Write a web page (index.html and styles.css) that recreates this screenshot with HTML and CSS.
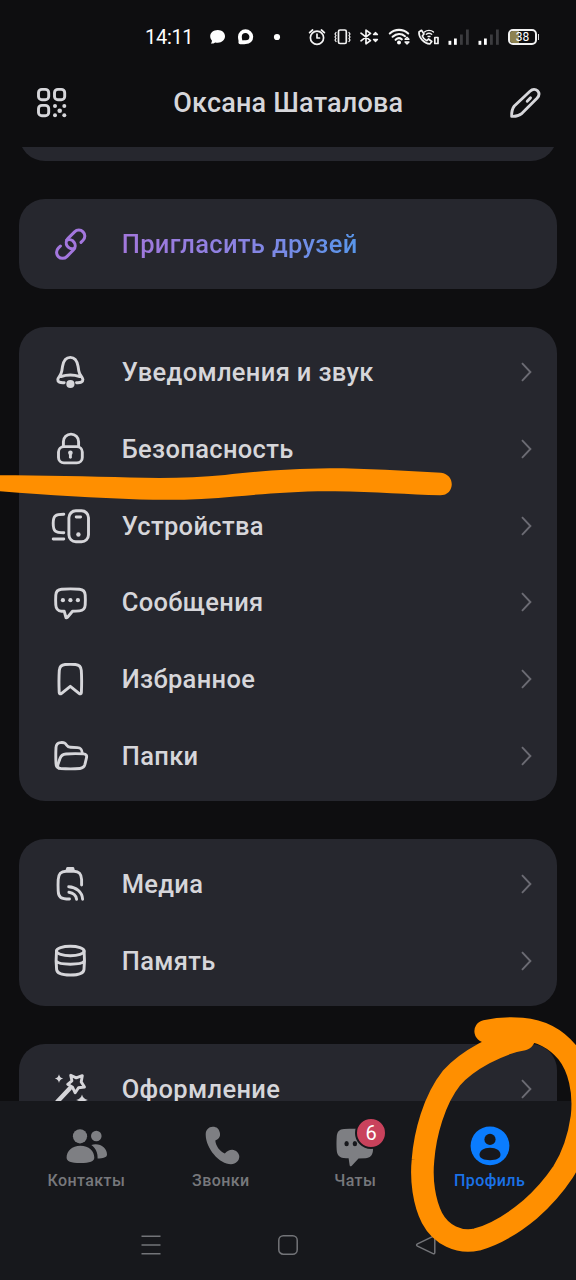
FILE: index.html
```html
<!DOCTYPE html>
<html lang="ru">
<head>
<meta charset="utf-8">
<title>Профиль</title>
<link rel="stylesheet" href="styles.css">
</head>
<body>
<div class="screen">
  <header class="status">
    <span class="time">14:11</span>
    <svg width="20" height="24" viewBox="0 0 20 24" class="solid"><path d="M9.800 5C14 5 17 7.800 17 11.300S14 17.800 9.800 17.800C8.800 17.800 8 17.700 7.200 17.400C6 18.300 4.600 18.700 2.800 18.600C3.600 17.800 4 16.800 3.900 15.600C2.800 14.400 2.200 13 2.200 11.300C2.200 7.800 5.400 5 9.800 5Z"/></svg>
    <svg width="20" height="24" viewBox="0 0 20 24"><path class="ring" d="M4.300 17.300C5 16.500 3.900 14.500 3.900 11.700C3.900 8.500 6.400 6.200 9.500 6.200S15.300 8.700 15.300 11.800S13 17.200 9.800 17.200C8.300 17.200 7.500 17.300 4.300 17.300Z"/></svg>
    <svg width="10" height="24" viewBox="0 0 10 24" class="solid"><circle cx="5" cy="12" r="3.100"/></svg>
    <svg width="22" height="24" viewBox="0 0 22 24" class="thin"><circle cx="11" cy="12.700" r="6.600"/><path d="M11 9.200V13H13.500M3.600 7.700L6.600 5M18.400 7.700L15.400 5"/></svg>
    <svg width="22" height="24" viewBox="0 0 22 24" class="thin"><rect x="6.500" y="5" width="7.800" height="13.500" rx="1.500"/><path class="fine" d="M4 7.500L3 9L4 10.500L3 12L4 13.500L3 15L4 16.500M17 7.500L18 9L17 10.500L18 12L17 13.500L18 15L17 16.500"/></svg>
    <svg width="22" height="24" viewBox="0 0 22 24" class="thin"><path d="M3 8.200L12.500 15.600L8 18.800V5.200L12.500 8.400L3 15.800"/><path class="fine" d="M15.500 9.500L17.500 7.500L19.500 9.500ZM15.500 14.500L17.500 16.500L19.500 14.500Z"/></svg>
    <svg width="24" height="24" viewBox="0 0 24 24" class="thin"><path class="heavy" d="M1.800 8.500C7 3.700 15 3.700 20.200 8.500M4.600 11.700C8.500 8.300 13.500 8.300 17 11.200M7.600 14.800C9.500 13 12 12.900 13.800 14.400"/><circle class="dot" cx="11" cy="17.600" r="2"/><path class="fine" d="M17 14.300L19 12.300L21 14.300ZM17 17L19 19L21 17Z"/></svg>
    <svg width="24" height="24" viewBox="0 0 24 24" class="thin"><path d="M3 7L5.500 5.300L8 9L6.300 11C7 13 8.800 14.900 10.800 15.700L12.500 14L15.800 16.500L13.800 19C8 18.500 2.500 12.500 3 7Z"/><path class="fine" d="M8.500 7C11 4.800 15 4.800 17.500 7M10.300 9.300C12 8 14 8 15.700 9.300M12 11.500H14"/><rect x="18.800" y="12.500" width="3.200" height="6"/></svg>
    <svg width="24" height="24" viewBox="0 0 24 24" class="solid"><rect x="2.500" y="15.800" width="2.800" height="4"/><rect x="8" y="13.500" width="2.800" height="6.300"/><g class="weak"><rect x="14" y="9.500" width="2.800" height="10.300"/><rect x="20" y="4.500" width="2.800" height="15.300"/></g></svg>
    <svg width="24" height="24" viewBox="0 0 24 24" class="solid"><rect x="2.500" y="15.800" width="2.800" height="4"/><rect x="8" y="13.500" width="2.800" height="6.300"/><g class="weak"><rect x="14" y="9.500" width="2.800" height="10.300"/><rect x="20" y="4.500" width="2.800" height="15.300"/></g></svg>
    <div class="power">
      <div class="battery"><span class="level"></span><span class="percent">38</span></div>
      <span class="nub"></span>
    </div>
  </header>

  <div class="titlebar">
    <svg width="32" height="32" viewBox="0 0 32 32" class="icon"><rect x="2.500" y="2.400" width="10.200" height="10.400" rx="3.400"/><rect x="18.500" y="2.400" width="10.200" height="10.400" rx="3.400"/><rect x="2.500" y="18.400" width="10.200" height="10.400" rx="3.400"/><g class="fill"><circle cx="19" cy="19" r="2"/><circle cx="28.300" cy="19" r="2"/><circle cx="23.700" cy="23.700" r="2.300"/><circle cx="19" cy="28.200" r="2"/><circle cx="28.300" cy="28.200" r="2"/></g></svg>
    <h1 class="title">Оксана Шаталова</h1>
    <svg width="32" height="32" viewBox="0 0 32 32" class="icon"><path d="M2.700 29.300C2.500 25.500 3 22 5.300 19L21 4.200C23.500 1.800 26.500 1.800 28.500 3.800C30.700 6 30.300 8.800 28 11.300L13 26.300C10 28.700 6.500 29.600 2.700 29.300Z"/><path d="M18.200 14.200L21.500 10.900"/></svg>
  </div>

  <main class="scroll">
    <section class="card card-cut"></section>
    <section class="card">
      <div class="row invite">
        <svg width="42" height="42" viewBox="0 0 42 42" class="icon link"><g transform="translate(21.700 21.200) rotate(-45)"><path d="M8.500 6H11.500A6 6 0 0 0 11.500-6H2.200A6 6 0 0 0 0 5.600"/><path d="M-8.500-6H-11.500A6 6 0 0 0-11.500 6H-2.200A6 6 0 0 0 0-5.600"/></g></svg>
        <span class="label">Пригласить друзей</span>
      </div>
    </section>

    <section class="card">
      <div class="row">
        <svg width="42" height="42" viewBox="0 0 42 42" class="icon"><path d="M15.200 31.700C11 32 8.600 31 8.800 28.500C9.500 25.500 12 24.500 12.800 20L13.500 15.500C14.500 9.500 17 6.400 21.300 6.400S28.100 9.500 29.100 15.500L29.800 20C30.600 24.500 33.300 25.500 33.900 28.500C34 31 31.600 32 27.500 31.700M12 25.500Q21.300 22.500 30.700 25.500"/><circle class="dot" cx="21.400" cy="33" r="4.100"/></svg>
        <span class="label">Уведомления и звук</span>
        <svg width="12" height="20" viewBox="0 0 12 20" class="chevron"><path d="M1 1.200L9.400 10L1 18.800"/></svg>
      </div>
      <div class="row">
        <svg width="42" height="42" viewBox="0 0 42 42" class="icon"><rect x="9.500" y="18.600" width="23.800" height="16.300" rx="5.500"/><path d="M14.400 18.600V13.700A7.600 7.600 0 0 1 29.600 13.700V18.600"/><circle class="dot" cx="21.400" cy="24.700" r="2.300"/><path d="M21.400 25V29.200"/></svg>
        <span class="label">Безопасность</span>
        <svg width="12" height="20" viewBox="0 0 12 20" class="chevron"><path d="M1 1.200L9.400 10L1 18.800"/></svg>
      </div>
      <div class="row">
        <svg width="42" height="42" viewBox="0 0 42 42" class="icon"><rect x="19.900" y="5.800" width="19.600" height="31" rx="7"/><path d="M27.200 12H31.600M14.800 9.300C6.500 9.400 4.200 10.300 4.200 18.200C4.200 26.700 6.500 27.600 14.800 27.700M4.200 34H14.800"/><circle class="dot" cx="29.400" cy="29.500" r="2.200"/></svg>
        <span class="label">Устройства</span>
        <svg width="12" height="20" viewBox="0 0 12 20" class="chevron"><path d="M1 1.200L9.400 10L1 18.800"/></svg>
      </div>
      <div class="row">
        <svg width="42" height="42" viewBox="0 0 42 42" class="icon"><path d="M15.200 30.200H12.500C8.800 30 7 27.700 6.800 24C6.600 21 6.600 17 6.800 14C7 10.500 9 8.500 12.500 8.200C18 7.800 25 7.800 30.500 8.200C34 8.500 36 10.500 36.200 14C36.400 17 36.400 21 36.200 24C36 27.500 34 29.500 30.500 29.900C28 30.200 25.500 30.300 23.500 30.300L18.500 36.200C17.500 37.300 16.900 36.900 16.800 36Z"/><g class="fill"><circle cx="13.900" cy="19.200" r="2.100"/><circle cx="21.400" cy="19.200" r="2.100"/><circle cx="28.900" cy="19.200" r="2.100"/></g></svg>
        <span class="label">Сообщения</span>
        <svg width="12" height="20" viewBox="0 0 12 20" class="chevron"><path d="M1 1.200L9.400 10L1 18.800"/></svg>
      </div>
      <div class="row">
        <svg width="42" height="42" viewBox="0 0 42 42" class="icon"><path d="M10.200 34.500C9.900 27.300 9.900 18.300 10.300 12.300C10.600 8.600 12.500 6.800 16 6.500C19.500 6.300 23 6.300 26.500 6.500C30 6.800 32 8.600 32.300 12.300C32.700 18.300 32.700 27.300 32.400 34.500C32.400 36.100 31.200 36.300 30 35.300L21.300 28.300L12.600 35.300C11.400 36.300 10.200 36.100 10.200 34.500Z"/></svg>
        <span class="label">Избранное</span>
        <svg width="12" height="20" viewBox="0 0 12 20" class="chevron"><path d="M1 1.200L9.400 10L1 18.800"/></svg>
      </div>
      <div class="row">
        <svg width="42" height="42" viewBox="0 0 42 42" class="icon"><path d="M10 33.300C7.800 32.600 7.100 31 7 28.500C6.700 23 6.700 18 7 12.500C7.200 9.300 8.500 7.800 11.500 7.600C15.500 7.300 16.200 8 17.700 10.200C18.700 11.700 19.500 12.200 21.500 12.300L28.500 12.600C31.800 12.800 33 14 33.300 18.500"/><path d="M17 19C23 18.500 29 18.500 34.500 18.900C37.200 19.100 38 20.500 37.500 22.700L35.900 29.500C35.200 32.200 34 33.200 31 33.500C25 34 18 34 11.800 33.500C9 33.200 8.300 31.800 8.900 29.500L11 23.500C12 20.500 13.500 19.300 17 19Z"/></svg>
        <span class="label">Папки</span>
        <svg width="12" height="20" viewBox="0 0 12 20" class="chevron"><path d="M1 1.200L9.400 10L1 18.800"/></svg>
      </div>
    </section>

    <section class="card">
      <div class="row">
        <svg width="42" height="42" viewBox="0 0 42 42" class="icon"><path d="M20.500 36C12 36 9.400 34.500 9.200 28C9 24 9 20 9.200 16.500C9.500 10.500 12 8.500 17 8.300H25C30 8.500 32.300 10.500 32.600 16.500V22M19.700 23.700C27 24 33.300 29 33.600 36.200M19.900 29.200C24 29.800 27 32.300 27.600 36.200"/><path class="fill" d="M16.300 8.500L17.300 4.800Q17.500 4 18.500 4H24Q25 4 25.200 4.800L26 8.500Z"/></svg>
        <span class="label">Медиа</span>
        <svg width="12" height="20" viewBox="0 0 12 20" class="chevron"><path d="M1 1.200L9.400 10L1 18.800"/></svg>
      </div>
      <div class="row">
        <svg width="42" height="42" viewBox="0 0 42 42" class="icon"><ellipse cx="21.300" cy="11" rx="13.800" ry="4.700"/><path d="M7.500 11C7 17 7 24 7.600 29.500C8 33.500 13 35 21.300 35S34.600 33.500 35 29.500C35.600 24 35.600 17 35.100 11M7.500 21.300C10 25.200 32.600 25.200 35.100 21.300"/></svg>
        <span class="label">Память</span>
        <svg width="12" height="20" viewBox="0 0 12 20" class="chevron"><path d="M1 1.200L9.400 10L1 18.800"/></svg>
      </div>
    </section>

    <section class="card">
      <div class="row">
        <svg width="42" height="42" viewBox="0 0 42 42" class="icon"><path d="M21.700 7.300L27.200 9.900L33.300 7.700L32.200 13.900L35.500 19L29.500 19.800L26.200 24.800L23.600 19.300L18.700 16.300L22.900 12.800Z"/><path d="M20.700 20.500L8.500 33.500" class="wand"/><path class="fill" d="M10 6.200Q10.700 9.800 14.300 10.600Q10.700 11.400 10 15Q9.300 11.400 5.700 10.600Q9.300 9.800 10 6.200ZM33 26.500Q33.900 30.900 38.900 32Q33.900 33 33 37.500Q32 33 27.200 32Q32 30.900 33 26.500Z"/></svg>
        <span class="label">Оформление</span>
        <svg width="12" height="20" viewBox="0 0 12 20" class="chevron"><path d="M1 1.200L9.400 10L1 18.800"/></svg>
      </div>
    </section>
  </main>

  <footer class="bottom">
    <nav class="tabs">
      <div class="tab">
        <svg width="42" height="42" viewBox="0 0 42 42" class="tabicon"><circle cx="15" cy="11.300" r="7.100"/><circle cx="31.300" cy="11" r="5.300"/><path d="M15.400 20.700C24 20.700 29.300 26 29.300 32.500C29.300 36.500 25 38 15.400 38S1.600 36.500 1.600 32.500C1.600 26 7 20.700 15.400 20.700ZM26.300 20C34.500 17.500 42 22.500 42 29.500C42 32.500 38 33.400 32.600 33.500C32.800 28 31 23.500 26.300 20Z"/></svg>
        <span>Контакты</span>
      </div>
      <div class="tab">
        <svg width="42" height="42" viewBox="0 0 42 42" class="tabicon"><path d="M5.700 9.500C5.700 4.800 8.800 1.700 12.700 1.700C17 1.700 18.800 3.800 19.800 7.500C20.600 11 19.700 13.500 15.300 15.500C15.800 21 19.500 26 24.800 28.500C27.500 26 29 24.800 32.200 24.800C36 24.800 39.300 28.500 39.300 31.500C39.300 35.500 36 39.200 31 39.200C19.500 39.200 5.700 23.500 5.700 9.500Z"/></svg>
        <span>Звонки</span>
      </div>
      <div class="tab">
        <div class="badged">
          <svg width="42" height="42" viewBox="0 0 42 42" class="tabicon"><path d="M14.600 33.300H12C5.500 33 3 30.500 2.700 25C2.400 21 2.400 16 2.700 12C3 6.500 5.500 4.200 10 4C17 3.600 25 3.600 31 4C36.500 4.300 38.800 7 39 12C39.300 16 39.300 21 39 25C38.700 30.500 36 32.800 31.500 33.200L24.500 33.600L17.800 40.700C16.500 41.800 15.800 41.300 15.600 40Z"/><g class="eye"><ellipse cx="12.600" cy="18.700" rx="2.200" ry="2.600"/><ellipse cx="20.900" cy="18.700" rx="2.200" ry="2.600"/></g></svg>
          <span class="badge">6</span>
        </div>
        <span>Чаты</span>
      </div>
      <div class="tab active">
        <svg width="42" height="42" viewBox="0 0 42 42" class="tabicon"><circle cx="21" cy="20.800" r="19.400"/><g class="eye"><circle cx="21" cy="14.400" r="5.600"/><path d="M21 22.800C27.500 22.800 31.500 25.800 31.500 29.800C31.500 33.500 27 35.200 21 35.200S10.500 33.500 10.500 29.800C10.500 25.800 14.500 22.800 21 22.800Z"/></g></svg>
        <span>Профиль</span>
      </div>
    </nav>
    <div class="sysnav">
      <svg width="20" height="22" viewBox="0 0 20 22"><path d="M.5 2.200H19.500M.5 11H19.500M.5 19.800H19.500"/></svg>
      <svg width="20" height="22" viewBox="0 0 20 22"><rect x=".8" y="1.800" width="18.400" height="18.400" rx="4.500"/></svg>
      <svg width="20" height="22" viewBox="0 0 20 22"><path d="M1.500 9.900L17 2.400Q18.800 1.800 18.800 3.500V18.500Q18.800 20.200 17 19.600L1.500 12.100Q-.3 11 1.500 9.900Z"/></svg>
    </div>
  </footer>

  <svg class="marker" width="576" height="1280" viewBox="0 0 576 1280">
    <path class="ink" d="M0 475.200C40 475.200 90 476.300 130 477.400C165 478.500 195 477.700 225 475C255 471.500 290 468.500 330 468.200C365 468.200 405 470.800 441 472.700C456 474.500 455 495.500 440 495.300C410 494.500 375 491.700 335 491.200C295 490.800 265 494 235 496.500C205 499.700 175 500.300 140 499.500C95 498 50 495.300 0 491.300Z"/>
    <path class="loop" d="M485.700 1031.200C497 1028.800 510 1028 522 1029C540 1030.500 556 1039 567 1052C579 1067 585 1091 582 1117C579 1138 573 1156 563 1172C553 1187 542 1199 530 1209.500C512 1224.500 495 1234.500 477 1239.500C459 1243.500 441 1235 432 1218C424 1202 421 1180 423 1160C425 1134 434 1100 451.500 1078C467 1060.500 499 1043 523.500 1039"/>
  </svg>
</div>
</body>
</html>
```
FILE: styles.css
```css
* { box-sizing: border-box; }
body { margin: 0; background: #0e0e10; font-family: Roboto, "Noto Sans", sans-serif; }
svg { display: block; overflow: visible; flex: none; }

.screen {
  position: relative;
  width: 576px;
  height: 1280px;
  overflow: hidden;
  display: flex;
  flex-direction: column;
  background: #0e0e10;
  color: #d6d6da;
}

/* Status bar */
.status {
  height: 61px;
  flex: none;
  padding: 13px 0 0 145px;
  display: grid;
  grid-template-columns: 63px 28px 36px 34px 26px 26px 30px 28px 30px 30px 30px 36px;
  align-items: center;
  color: #fff;
}
.time { font-size: 20px; letter-spacing: -0.3px; }
.solid { fill: #fff; }
.weak { fill: #3c3c3f; }
.ring { fill: none; stroke: #fff; stroke-width: 3.800; stroke-linejoin: round; }
.thin { fill: none; stroke: #f4f4f4; stroke-width: 1.7; stroke-linecap: round; stroke-linejoin: round; }
.heavy { stroke-width: 2.1; }
.fine { stroke-width: 1.3; }
.thin .dot { fill: #fff; stroke: none; }
.power { display: flex; align-items: center; gap: 1px; margin-left: 2px; }
.battery {
  position: relative;
  width: 29px;
  height: 16px;
  border: 2px solid #f2f2f2;
  border-radius: 5px;
  overflow: hidden;
  display: flex;
  align-items: center;
  justify-content: center;
}
.nub { width: 1px; height: 6px; background: #d8d8d8; }
.level { position: absolute; left: 0; top: 0; bottom: 0; width: 9px; background: #8d8250; }
.percent { position: relative; font-size: 12px; line-height: 12px; }

/* Title bar */
.titlebar {
  height: 86px;
  flex: none;
  padding: 26px 35.500px 0 36px;
  display: flex;
  align-items: flex-start;
  justify-content: space-between;
}
.title { margin: 0; font-size: 27px; font-weight: 500; line-height: 32px; letter-spacing: 0.2px; white-space: nowrap; }

/* Icons */
.icon { fill: none; stroke: #d6d6da; stroke-width: 2.9; stroke-linecap: round; stroke-linejoin: round; }
.icon .dot, .icon .fill { fill: #d6d6da; stroke: none; }
.wand { stroke-width: 4.4; }
.link { stroke: #a377de; stroke-width: 3; }
.chevron { fill: none; stroke: #6b6b73; stroke-width: 1.900; }

/* Settings list */
.scroll {
  height: 954px;
  flex: none;
  overflow: hidden;
  padding: 0 19.200px;
  display: flex;
  flex-direction: column;
  gap: 38.400px;
}
.card { flex: none; background: #26272e; border-radius: 26px; padding: 6.400px 0; }
.card-cut { height: 90px; margin-top: -76.200px; }
.row { height: 76.800px; display: flex; align-items: center; padding: 0 24px 0 30px; }
.label { flex: 1; margin-left: 30.500px; font-size: 25.500px; font-weight: 500; line-height: 32px; letter-spacing: 0.340px; white-space: nowrap; }
.invite .label {
  flex: none;
  color: transparent;
  background: linear-gradient(90deg, #a277dc, #8b83e2 50%, #5896ea);
  -webkit-background-clip: text;
  background-clip: text;
}

/* Bottom area */
.bottom { flex: 1; background: #17181c; }
.tabs { display: flex; height: 120px; padding: 24px 19.200px 0; }
.tab { flex: 1; display: flex; flex-direction: column; align-items: center; gap: 3px; color: #77787c; font-size: 16px; font-weight: 500; line-height: 22px; letter-spacing: 0.4px; }
.tabicon { fill: #7e7f83; }
.eye { fill: #17181c; }
.active { color: #1a72e8; }
.active .tabicon { fill: #0a7cff; }
.badged { position: relative; }
.badge {
  position: absolute;
  left: 21px;
  top: -8px;
  width: 32px;
  height: 32px;
  border: 2.500px solid #17181c;
  border-radius: 50%;
  background: #c9425c;
  color: #fff;
  font-size: 20px;
  font-weight: 400;
  line-height: 28px;
  letter-spacing: 0;
  text-align: center;
}
.sysnav { display: flex; justify-content: center; gap: 117.500px; padding-top: 13px; }
.sysnav svg { fill: none; stroke: #737478; stroke-width: 1.500; }

/* Freehand marker over the screen */
.marker { position: absolute; left: 0; top: 0; pointer-events: none; }
.ink { fill: #ff8f00; }
.loop { fill: none; stroke: #ff8f00; stroke-width: 22.600; stroke-linecap: round; stroke-linejoin: round; }
```
